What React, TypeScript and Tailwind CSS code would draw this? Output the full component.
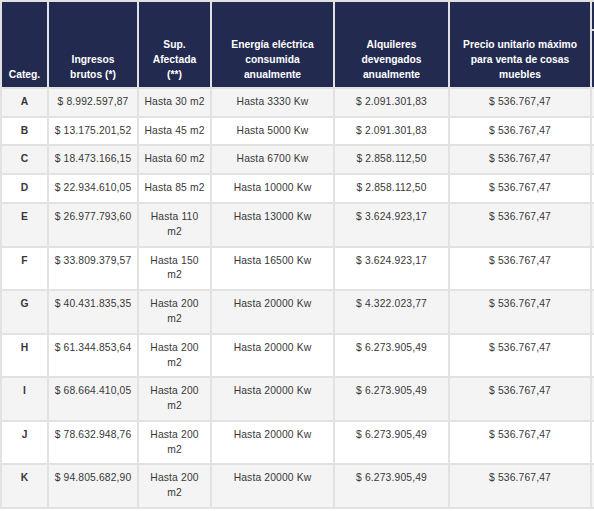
const ROWS = [
  ['A', '$ 8.992.597,87', 'Hasta 30 m2', 'Hasta 3330 Kw', '$ 2.091.301,83', '$ 536.767,47'],
  ['B', '$ 13.175.201,52', 'Hasta 45 m2', 'Hasta 5000 Kw', '$ 2.091.301,83', '$ 536.767,47'],
  ['C', '$ 18.473.166,15', 'Hasta 60 m2', 'Hasta 6700 Kw', '$ 2.858.112,50', '$ 536.767,47'],
  ['D', '$ 22.934.610,05', 'Hasta 85 m2', 'Hasta 10000 Kw', '$ 2.858.112,50', '$ 536.767,47'],
  ['E', '$ 26.977.793,60', 'Hasta 110\nm2', 'Hasta 13000 Kw', '$ 3.624.923,17', '$ 536.767,47'],
  ['F', '$ 33.809.379,57', 'Hasta 150\nm2', 'Hasta 16500 Kw', '$ 3.624.923,17', '$ 536.767,47'],
  ['G', '$ 40.431.835,35', 'Hasta 200\nm2', 'Hasta 20000 Kw', '$ 4.322.023,77', '$ 536.767,47'],
  ['H', '$ 61.344.853,64', 'Hasta 200\nm2', 'Hasta 20000 Kw', '$ 6.273.905,49', '$ 536.767,47'],
  ['I', '$ 68.664.410,05', 'Hasta 200\nm2', 'Hasta 20000 Kw', '$ 6.273.905,49', '$ 536.767,47'],
  ['J', '$ 78.632.948,76', 'Hasta 200\nm2', 'Hasta 20000 Kw', '$ 6.273.905,49', '$ 536.767,47'],
  ['K', '$ 94.805.682,90', 'Hasta 200\nm2', 'Hasta 20000 Kw', '$ 6.273.905,49', '$ 536.767,47'],
]

const HEADERS = [
  'Categ.',
  'Ingresos\nbrutos (*)',
  'Sup.\nAfectada\n(**)',
  'Energía eléctrica\nconsumida\nanualmente',
  'Alquileres\ndevengados\nanualmente',
  'Precio unitario máximo\npara venta de cosas\nmuebles',
]

const WIDTHS = ['w-[47px]', 'w-[90px]', 'w-[73px]', 'w-[123px]', 'w-[115px]', 'w-[142px]', 'w-[130px]']

const th =
  'border-2 border-[#e2e2e2] bg-[#232a4f] px-[4px] pb-[5px] align-bottom text-center font-bold text-white whitespace-pre-line leading-[15px]'

export default function App() {
  return (
    <div className="w-[594px] h-[511px] overflow-hidden bg-white font-['Liberation_Sans',Arial,sans-serif] text-[10.3px]">
      <table className="table-fixed border-collapse w-[720px]">
        <colgroup>
          {WIDTHS.map((w, i) => (
            <col key={i} className={w} />
          ))}
        </colgroup>
        <thead>
          <tr>
            {HEADERS.map((h, i) => (
              <th key={i} rowSpan={2} className={th}>
                {h}
              </th>
            ))}
            <th className="border-2 border-[#e2e2e2] bg-[#232a4f] h-[29px] p-0" />
          </tr>
          <tr>
            <th className="border-2 border-[#e2e2e2] bg-[#232a4f] h-[58px] p-0" />
          </tr>
        </thead>
        <tbody>
          {ROWS.map((r, i) => (
            <tr key={r[0]} className={i % 2 === 0 ? 'bg-[#f4f4f4]' : 'bg-white'}>
              {r.map((c, j) => (
                <td
                  key={j}
                  className={`border-2 border-[#e2e2e2] px-[4px] pt-[6px] pb-[5.9px] align-top text-center whitespace-pre-line leading-[14.85px] text-[#383838] ${
                    j === 0 ? 'font-bold' : 'tracking-[0.15px]'
                  }`}
                >
                  {c}
                </td>
              ))}
              <td className="border-2 border-[#e2e2e2] p-0" />
            </tr>
          ))}
        </tbody>
      </table>
    </div>
  )
}
